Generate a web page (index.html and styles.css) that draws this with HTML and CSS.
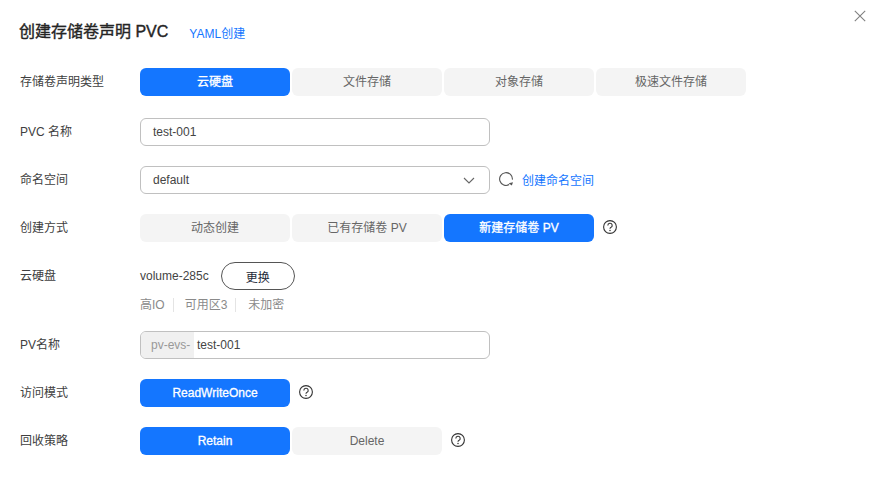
FILE: index.html
```html
<!DOCTYPE html>
<html lang="zh-CN">
<head>
<meta charset="utf-8">
<title>创建存储卷声明 PVC</title>
<link rel="stylesheet" href="styles.css">
</head>
<body>
<div class="dialog">
  <button class="close" aria-label="关闭">
    <svg width="12" height="12" viewBox="0 0 12 12"><path d="M.8.8l10.4 10.4M11.2.8L.8 11.2" stroke="#808080" stroke-width="1.1" fill="none"/></svg>
  </button>
  <header class="head">
    <h1 class="title">创建存储卷声明 PVC</h1>
    <a class="link yaml">YAML创建</a>
  </header>
  <div class="form">
    <div class="row first">
      <div class="label">存储卷声明类型</div>
      <div class="seg">
        <div class="opt on">云硬盘</div>
        <div class="opt">文件存储</div>
        <div class="opt">对象存储</div>
        <div class="opt">极速文件存储</div>
      </div>
    </div>
    <div class="row">
      <div class="label">PVC 名称</div>
      <div class="input">test-001</div>
    </div>
    <div class="row">
      <div class="label">命名空间</div>
      <div class="input select">default
        <svg class="chev" width="12" height="7" viewBox="0 0 12 7"><path d="M1 1l5 5 5-5" stroke="#666" stroke-width="1.1" fill="none"/></svg>
      </div>
      <svg class="refresh" width="16" height="16" viewBox="0 0 16 16"><path d="M11.2 13.6A6.4 6.4 0 1 1 14.4 8.6" stroke="#555" stroke-width="1.1" fill="none"/><path d="M10.6 12.2l4.4-.9-1.2 3.2z" fill="#555"/></svg>
      <a class="link ns">创建命名空间</a>
    </div>
    <div class="row">
      <div class="label">创建方式</div>
      <div class="seg">
        <div class="opt">动态创建</div>
        <div class="opt">已有存储卷 PV</div>
        <div class="opt on">新建存储卷 PV</div>
      </div>
      <svg class="help" width="14" height="14" viewBox="0 0 14 14"><circle cx="7" cy="7" r="6.4" stroke="#333" stroke-width="1.1" fill="none"/><path d="M4.8 5.4A2.2 2.2 0 1 1 7.8 7.5c-.5.3-.8.6-.8 1.2" stroke="#333" stroke-width="1.1" fill="none"/><circle cx="7" cy="10.6" r=".75" fill="#333"/></svg>
    </div>
    <div class="row disk">
      <div class="label">云硬盘</div>
      <div class="disk-body">
        <div class="disk-top">
          <span class="vol">volume-285c</span>
          <button class="swap">更换</button>
        </div>
        <div class="meta">
          <span>高IO</span><span>可用区3</span><span>未加密</span>
        </div>
      </div>
    </div>
    <div class="row">
      <div class="label">PV名称</div>
      <div class="input prefixed"><span class="prefix">pv-evs-</span><span class="val">test-001</span></div>
    </div>
    <div class="row">
      <div class="label">访问模式</div>
      <div class="seg">
        <div class="opt on">ReadWriteOnce</div>
      </div>
      <svg class="help" width="14" height="14" viewBox="0 0 14 14"><circle cx="7" cy="7" r="6.4" stroke="#333" stroke-width="1.1" fill="none"/><path d="M4.8 5.4A2.2 2.2 0 1 1 7.8 7.5c-.5.3-.8.6-.8 1.2" stroke="#333" stroke-width="1.1" fill="none"/><circle cx="7" cy="10.6" r=".75" fill="#333"/></svg>
    </div>
    <div class="row">
      <div class="label">回收策略</div>
      <div class="seg">
        <div class="opt on">Retain</div>
        <div class="opt">Delete</div>
      </div>
      <svg class="help" width="14" height="14" viewBox="0 0 14 14"><circle cx="7" cy="7" r="6.4" stroke="#333" stroke-width="1.1" fill="none"/><path d="M4.8 5.4A2.2 2.2 0 1 1 7.8 7.5c-.5.3-.8.6-.8 1.2" stroke="#333" stroke-width="1.1" fill="none"/><circle cx="7" cy="10.6" r=".75" fill="#333"/></svg>
    </div>
  </div>
</div>
</body>
</html>
```
FILE: styles.css
```css
* { box-sizing: border-box; }
html, body { margin: 0; height: 100%; background: #fff; overflow: hidden; }
body { font-family: "Liberation Sans", "Noto Sans CJK SC", sans-serif; font-size: 12px; color: #252b3a; }
.dialog { position: relative; width: 883px; height: 477px; padding: 20px 20px 0; }
.close { position: absolute; top: 10px; right: 17px; width: 12px; height: 12px; padding: 0; border: 0; background: none; display: flex; }
.head { display: flex; align-items: center; height: 24px; margin-bottom: 24px; }
.title { margin: 0 0 0 -1px; font-size: 16px; font-weight: 400; -webkit-text-stroke: 0.4px #252525; line-height: 24px; color: #252525; }
.link { color: #1476ff; font-size: 12px; }
.yaml { margin-left: 21px; }
.form { display: flex; flex-direction: column; gap: 20px; }
.row { display: flex; align-items: center; min-height: 28px; }
.row.first { margin-bottom: 2px; }
.row.disk { align-items: flex-start; }
.label { width: 120px; flex: none; line-height: 28px; color: #404040; }
.seg { display: flex; gap: 2px; }
.opt { width: 150px; height: 28px; line-height: 28px; text-align: center; border-radius: 6px; background: #f4f4f4; color: #666; }
.opt.on { background: #1476ff; color: #fff; -webkit-text-stroke: 0.3px #fff; }
.input { width: 350px; height: 28px; line-height: 26px; padding: 0 12px; border: 1px solid #c0c0c0; border-radius: 6px; color: #444; background: #fff; }
.select { display: flex; align-items: center; justify-content: space-between; }
.chev { margin-right: 2px; }
.refresh { margin-left: 8px; margin-bottom: 2px; }
.ns { margin-left: 8px; margin-bottom: 2px; }
.help { margin-left: 9px; margin-bottom: 2px; }
.disk-body { display: flex; flex-direction: column; }
.disk-top { display: flex; align-items: center; height: 28px; }
.vol { color: #444; }
.swap { margin-left: 12px; width: 74px; height: 28px; padding: 0; border: 1px solid #555; border-radius: 14px; background: #fff; color: #252b3a; font: inherit; }
.meta { display: flex; align-items: center; margin-top: 8px; height: 13px; line-height: 14px; color: #8a8a8a; }
.meta span + span { margin-left: 8px; padding-left: 11px; border-left: 1px solid #e4e4e4; }
.meta span:last-child { padding-left: 12px; }
.prefixed { display: flex; padding: 0; overflow: hidden; }
.prefix { width: 53px; padding-left: 10px; background: #f0f0f0; color: #999; white-space: nowrap; }
.val { margin-left: 3px; color: #444; }
```
